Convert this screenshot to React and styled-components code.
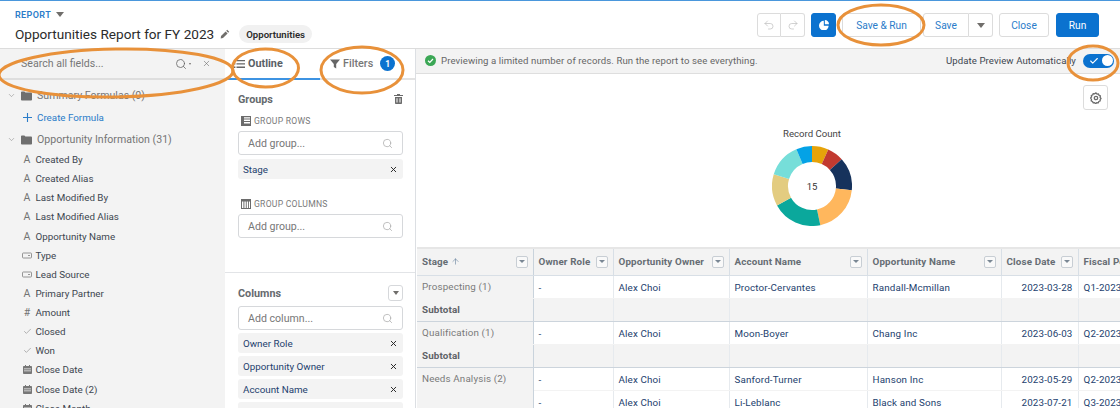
import React from "react";
import styled, { createGlobalStyle } from "styled-components";
import { Search, X, ChevronDown, Undo2, Redo2, Check, ArrowUp } from "lucide-react";

const Global = createGlobalStyle`
  html, body { margin: 0; padding: 0; height: 408px; overflow: hidden; background: #fff; }
  body { font-family: Roboto, "Liberation Sans", sans-serif; font-size: 11px; color: #2b3a4a; }
  * { box-sizing: border-box; }
`;

const Page = styled.div`
  position: relative; width: 1120px; height: 408px; overflow: hidden;
  display: flex; flex-direction: column; border-top: 1.5px solid #4a97dc;
`;
const Header = styled.header`
  height: 48px; flex: none; display: flex; align-items: flex-start; justify-content: space-between;
  padding: 6px 21px 0 15px; border-bottom: 1.5px solid #dcdcdc;
`;
const TitleBlock = styled.div`display: flex; flex-direction: column; gap: 2px;`;
const Eyebrow = styled.div`
  display: flex; align-items: center; gap: 5px; height: 15px;
  font-size: 9px; font-weight: 600; letter-spacing: .4px; color: #2a7cc9;
`;
const Caret = styled.span`
  width: 0; height: 0; border-left: ${p => p.$w || 4}px solid transparent; border-right: ${p => p.$w || 4}px solid transparent;
  border-top: ${p => p.$h || 5}px solid ${p => p.$c || "#706e6b"};
`;
const TitleRow = styled.div`display: flex; align-items: center; height: 20px;`;
const Title = styled.h1`margin: 0; font-size: 13.6px; font-weight: 400; color: #2b2b2b; white-space: nowrap;`;
const PencilWrap = styled.span`display: flex; margin: 0 9px 0 6px; color: #706e6b;`;
const Badge = styled.span`
  height: 18px; padding: 0 7px; border-radius: 9px; background: #f1f1f1; display: flex; align-items: center;
  font-size: 9.6px; font-weight: 600; color: #2b2b2b;
`;
const Toolbar = styled.div`display: flex; align-items: center; margin-top: 6px;`;
const Btn = styled.button`
  height: 24px; width: ${p => p.$w}px; margin-left: ${p => p.$ml || 0}px; padding: 0; font: inherit; font-size: 10.2px;
  display: flex; align-items: center; justify-content: center;
  border: 1px solid ${p => p.$primary ? "#0b72cf" : "#dcdcdc"}; border-radius: 3px;
  background: ${p => p.$primary ? "#0b72cf" : "#fff"}; color: ${p => p.$primary ? "#fff" : "#2a7cc9"};
`;
const SegGroup = styled.div`display: flex; margin-left: ${p => p.$ml || 0}px;`;
const SegBtn = styled(Btn)`
  border-radius: 0; color: ${p => p.$muted ? "#bdbdbd" : "#2a7cc9"};
  &:first-child { border-radius: 3px 0 0 3px; }
  &:last-child { border-radius: 0 3px 3px 0; border-left: 0; }
`;

const Body = styled.div`flex: 1; min-height: 0; display: flex;`;
const Fields = styled.aside`width: 225px; flex: none; background: #f3f3f3; display: flex; flex-direction: column;`;
const FieldSearch = styled.div`
  height: 31px; flex: none; display: flex; align-items: center; padding: 0 14px 0 21px; color: #706e6b;
  border-bottom: 2px solid #dedede; font-size: 10.6px;
`;
const Placeholder = styled.span`flex: 1; color: ${p => p.$c || "#777"};`;
const TinyCaret = styled.span`margin: 1px 11px 0 2px; display: flex;`;
const Tree = styled.div`padding-top: 5px; display: flex; flex-direction: column;`;
const Folder = styled.div`
  height: 21px; display: flex; align-items: center; padding-left: 7px; gap: 5px; color: #757575; font-size: 10.6px;
`;
const CreateRow = styled.div`
  height: 23px; display: flex; align-items: center; padding-left: 22px; gap: 4px; color: #2a7cc9; font-size: 9.8px;
`;
const FieldRow = styled.div`
  height: 19.13px; flex: none; display: flex; align-items: center; padding-left: 21px; font-size: 9.8px; color: #3d4650;
`;
const FieldIcon = styled.span`
  width: 12px; display: flex; justify-content: center; align-items: center; color: #747474; font-size: 10.5px; flex: none;
`;

const Outline = styled.section`
  width: 191px; flex: none; border-right: 1.5px solid #dcdfe3; display: flex; flex-direction: column;
`;
const Tabs = styled.div`height: 31px; flex: none; display: flex;`;
const Tab = styled.div`
  width: 96px; display: flex; align-items: center; padding-left: ${p => p.$pl}px; gap: 3px; font-size: 10.8px;
  font-weight: ${p => p.$active ? 700 : 500}; color: ${p => p.$active ? "#5a6066" : "#777"};
  border-bottom: 2px solid ${p => p.$active ? "#3d93e2" : "#e3e3e3"};
`;
const Count = styled.span`
  margin-left: 4px; width: 15px; height: 15px; border-radius: 50%; background: #0b72cf; color: #fff;
  font-size: 8.5px; font-weight: 700; display: flex; align-items: center; justify-content: center;
`;
const Section = styled.div`
  padding: ${p => p.$pad}; height: ${p => p.$h ? p.$h + "px" : "auto"}; flex: none;
  border-bottom: ${p => p.$line ? "1.5px solid #e2e4e7" : "none"};
`;
const SectionHead = styled.div`
  height: 18px; display: flex; align-items: center; justify-content: space-between; font-size: 10.8px; font-weight: 700; color: #666a6e;
`;
const SubHead = styled.div`
  height: 12px; margin: ${p => p.$m}; padding-left: 3px; display: flex; align-items: center; gap: 3px; font-size: 8.6px; letter-spacing: .25px; color: #7a7a7a;
`;
const InputBox = styled.div`
  height: 24px; border: 1px solid #d6d8db; border-radius: 3px; padding: 0 9px; display: flex; align-items: center;
  font-size: 10.6px; color: #7f7f7f; background: #fff;
`;
const Chip = styled.div`
  height: 20px; margin-top: ${p => p.$mt ?? 3}px; border-radius: 3px; background: #f3f3f3; padding: 0 5px; display: flex; align-items: center; justify-content: space-between;
  font-size: 9.8px; color: #23416e;
`;
const ColumnsInput = styled(InputBox)`margin-top: 4px;`;
const MenuBtn = styled.div`
  width: 15px; height: 16px; border: 1px solid #d6d8db; border-radius: 3px; display: flex; align-items: center; justify-content: center;
`;

const Preview = styled.main`flex: 1; min-width: 0; display: flex; flex-direction: column; overflow: hidden;`;
const Notice = styled.div`
  height: 24.5px; flex: none; background: #f3f3f3; border-bottom: 1.5px solid #dedede; display: flex; align-items: center;
  padding: 0 6px 0 9px; font-size: 9.6px; color: #666;
`;
const NoticeText = styled.span`flex: 1; margin-left: 5px; white-space: nowrap; letter-spacing: .1px;`;
const AutoLabel = styled.span`color: #3d4650; margin-right: 7px; letter-spacing: .1px; white-space: nowrap;`;
const Toggle = styled.span`
  width: 31px; height: 14px; border-radius: 7px; background: #0b72cf; display: flex; align-items: center; justify-content: space-between; padding: 0 1.5px 0 6px; color: #fff;
`;
const Knob = styled.span`width: 11px; height: 11px; border-radius: 50%; background: #fff;`;
const ChartZone = styled.div`
  height: 175px; flex: none; position: relative; display: flex; flex-direction: column; align-items: center; padding: 54.5px 0 0 88px;
`;
const GearBtn = styled.div`
  position: absolute; top: 11.5px; right: 12px; width: 25px; height: 25px; border: 1px solid #dcdcdc; border-radius: 3px; display: flex; align-items: center; justify-content: center; color: #6b6b6b;
`;
const ChartTitle = styled.div`font-size: 9.6px; color: #444; height: 15px; margin-bottom: 3px;`;

const Table = styled.table`
  table-layout: fixed; width: 762px; flex: none; border-collapse: collapse; font-size: 9.8px;
  border-top: 2px solid #e6e6e6; margin-top: -2px; margin-left: 1px;
`;
const Th = styled.th`
  height: 28px; padding: 0 5px; background: #f3f3f3; text-align: left; font-weight: 700; font-size: 9.8px; color: #666d73; letter-spacing: .15px;
  border-right: 1px solid ${p => p.$group ? "#c9d3dc" : "#d8dfe6"}; border-bottom: 1px solid #d8dfe6; white-space: nowrap;
`;
const ThInner = styled.div`display: flex; align-items: center; justify-content: space-between;`;
const ThLabel = styled.span`display: flex; align-items: center; gap: 3px;`;
const Filter = styled.span`
  width: 12px; height: 12px; border: 1px solid #c8ced4; border-radius: 2px; background: #f9f9f9; display: flex; align-items: center; justify-content: center; flex: none;
`;
const Td = styled.td`
  height: 23px; padding: 0 5px; white-space: nowrap; overflow: hidden; color: #23416e; letter-spacing: .15px;
  text-align: ${p => p.$right ? "right" : "left"}; background: ${p => p.$shade ? "#f3f3f3" : "#fff"};
  border-right: 1px solid #e6eaee; border-bottom: 1px solid ${p => p.$end ? "#ccd4dc" : "#f3f3f3"};
`;
const GroupTd = styled(Td)`
  background: #f3f3f3; color: ${p => p.$bold ? "#5f6368" : "#7a7a7a"}; font-weight: ${p => p.$bold ? 700 : 400}; vertical-align: top; padding-top: 5px;
  border-right: 1px solid #c9d3dc;
`;

const Overlay = styled.svg`position: absolute; left: 0; top: 0; width: 1120px; height: 408px; pointer-events: none;`;

const Pencil = () => (
  <svg width="10" height="10" viewBox="0 0 10 10" fill="currentColor"><path d="M7.2.8l2 2-1 1-2-2zM5.6 2.4l2 2L3 9 .7 9.4 1 7z" /></svg>
);
const FolderIcon = () => (
  <svg width="11" height="10" viewBox="0 0 11 10" fill="#6f6f6f"><path d="M0 1.2C0 .7.4.4.8.4h2.6l1 1.2h5.8c.4 0 .8.4.8.8v6.4c0 .5-.4.8-.8.8H.8C.4 9.6 0 9.3 0 8.800z" /></svg>
);
const Chev = () => <ChevronDown size={9} color="#8a8a8a" strokeWidth={1.5} />;
const ListIcon = () => (
  <svg width="11" height="10" viewBox="0 0 11 10" fill="#666"><path d="M0 1h1.4v1.3H0zM2.5 1H11v1.3H2.5zM0 4.3h1.4v1.3H0zM2.5 4.3H11v1.3H2.5zM0 7.6h1.4v1.3H0zM2.5 7.6H11v1.3H2.5z" /></svg>
);
const FunnelIcon = () => (
  <svg width="10" height="10" viewBox="0 0 10 10" fill="#666"><path d="M0 .5h10L6.2 5v4.5L3.8 8V5z" /></svg>
);
const TrashIcon = () => (
  <svg width="9" height="10" viewBox="0 0 9 10" fill="#6b6b6b"><path d="M3 0h3v1h3v1H0V1h3zM1 3h7v6.2c0 .4-.3.8-.8.8H1.8c-.5 0-.8-.4-.8-.8zm1.5 1.2v4.4h1V4.2zm3 0v4.4h1V4.2z" /></svg>
);
const RowsIcon = () => (
  <svg width="10" height="10" viewBox="0 0 10 10" fill="#6b6b6b"><path d="M0 0h10v10H0zm3 1.2v1.4h6V1.2zm0 2.4V5h6V3.6zM3 6v1.4h6V6z" fillRule="evenodd" /></svg>
);
const ColsIcon = () => (
  <svg width="10" height="10" viewBox="0 0 10 10" fill="#6b6b6b"><path d="M0 0h10v10H0zm1 2.6V9h1.4V2.6zm2.4 0V9h1.4V2.6zm2.3 0V9h1.4V2.6zm2.3 0V9H9V2.6z" fillRule="evenodd" /></svg>
);
const PieBtnIcon = () => (
  <svg width="10" height="10" viewBox="0 0 12 12" fill="#fff"><path d="M7 0a5 5 0 0 1 5 5H7zM5.800 1v6h5.800A5.800 5.800 0 1 1 5.800 1z" /></svg>
);
const GearIcon = () => (
  <svg width="12" height="12" viewBox="0 0 12 12" fill="none" stroke="#6b6b6b"><path d="M6 .9l1 1.2 1.5-.2.5 1.4 1.4.6-.3 1.5.9 1.1-.9 1.1.1 1.4-1.4.5-.6 1.4-1.5-.2-1 1-1.1-1-1.5.2-.5-1.4-1.4-.6.3-1.4L.6 6l1-1.1-.3-1.4 1.4-.6.5-1.3 1.5.2z" strokeWidth="1.3" strokeLinejoin="round" /><circle cx="6" cy="6" r="1.7" strokeWidth="1.3" /></svg>
);
const CalIcon = () => (
  <svg width="9" height="9" viewBox="0 0 9 9" fill="#777"><path d="M2 0h1v1h3V0h1v1h1.2c.4 0 .8.3.8.8v6.400c0 .5-.4.8-.8.8H.8C.4 9 0 8.700 0 8.200V1.800C0 1.300.4 1 .8 1H2zM1 3.500v.8h7v-.8zm0 2v.8h7v-.8z" fillRule="evenodd" /></svg>
);
const PickIcon = () => (
  <svg width="10" height="7" viewBox="0 0 10 7" fill="none" stroke="#8a8a8a" strokeWidth=".9"><rect x=".5" y="1" width="9" height="5" rx=".8" /><path d="M6 3.500h2" /></svg>
);
const CheckGreen = () => (
  <svg width="11" height="11" viewBox="0 0 11 11"><circle cx="5.500" cy="5.500" r="5.500" fill="#3ba755" /><path d="M3 5.700l1.800 1.700L8 4" fill="none" stroke="#fff" strokeWidth="1.200" /></svg>
);

const fieldIcon = t => ({
  a: <span>A</span>,
  p: <PickIcon />,
  n: <span>#</span>,
  c: <Check size={9} strokeWidth={1.4} />,
  d: <CalIcon />,
}[t]);

const fields = [
  ["a", "Created By"], ["a", "Created Alias"], ["a", "Last Modified By"], ["a", "Last Modified Alias"],
  ["a", "Opportunity Name"], ["p", "Type"], ["p", "Lead Source"], ["a", "Primary Partner"], ["n", "Amount"],
  ["c", "Closed"], ["c", "Won"], ["d", "Close Date"], ["d", "Close Date (2)"], ["d", "Close Month"],
];

const polar = (cx, cy, r, deg) => {
  const a = (deg - 90) * Math.PI / 180;
  return [cx + r * Math.cos(a), cy + r * Math.sin(a)];
};
const arc = (from, to) => {
  const [cx, cy, R, r] = [40, 40, 40, 24];
  const large = to - from > 180 ? 1 : 0;
  const p = [polar(cx, cy, R, from), polar(cx, cy, R, to), polar(cx, cy, r, to), polar(cx, cy, r, from)];
  return `M${p[0]} A${R} ${R} 0 ${large} 1 ${p[1]} L${p[2]} A${r} ${r} 0 ${large} 0 ${p[3]} Z`;
};
const slices = [
  [0, 24, "#e6a30a"], [24, 48, "#c23a30"], [48, 96, "#16325c"], [96, 168, "#ffb75d"],
  [168, 241, "#0ba89c"], [241, 287, "#e3cc80"], [287, 337, "#76ded9"], [337, 360, "#04a2e6"],
];
const Donut = () => (
  <svg width="80" height="80" viewBox="0 0 80 80">
    {slices.map(([a, b, c]) => <path key={c} d={arc(a, b)} fill={c} />)}
    <text x="40" y="43.500" textAnchor="middle" fontSize="9.500" fill="#333" fontFamily="Roboto, sans-serif">15</text>
  </svg>
);

const cols = [
  ["Stage", 116], ["Owner Role", 80], ["Opportunity Owner", 116], ["Account Name", 138],
  ["Opportunity Name", 134], ["Close Date", 77], ["Fiscal Period", 101],
];
const TinyFilter = () => <Filter><Caret $w={3} $h={3.5} $c="#7a8794" /></Filter>;

const Cells = ({ account, name, date, quarter, end }) => (
  <>
    <Td $end={end}>-</Td><Td $end={end}>Alex Choi</Td><Td $end={end}>{account}</Td><Td $end={end}>{name}</Td>
    <Td $end={end} $right>{date}</Td><Td $end={end}>{quarter}</Td>
  </>
);
const Subtotal = () => (
  <tr>
    <GroupTd $bold $end>Subtotal</GroupTd>
    {[0, 1, 2, 3, 4, 5].map(i => <Td key={i} $shade $end />)}
  </tr>
);

export default function App() {
  return (
    <Page>
      <Global />
      <Header>
        <TitleBlock>
          <Eyebrow>REPORT <Caret /></Eyebrow>
          <TitleRow>
            <Title>Opportunities Report for FY 2023</Title>
            <PencilWrap><Pencil /></PencilWrap>
            <Badge>Opportunities</Badge>
          </TitleRow>
        </TitleBlock>
        <Toolbar>
          <SegGroup>
            <SegBtn $w={24} $muted><Undo2 size={12} strokeWidth={1.4} /></SegBtn>
            <SegBtn $w={24} $muted><Redo2 size={12} strokeWidth={1.4} /></SegBtn>
          </SegGroup>
          <Btn $w={25} $ml={6} $primary><PieBtnIcon /></Btn>
          <Btn $w={79} $ml={6}>Save &amp; Run</Btn>
          <SegGroup $ml={2}>
            <SegBtn $w={46}>Save</SegBtn>
            <SegBtn $w={24}><Caret $w={4} $h={5} /></SegBtn>
          </SegGroup>
          <Btn $w={50} $ml={6}>Close</Btn>
          <Btn $w={43} $ml={7} $primary>Run</Btn>
        </Toolbar>
      </Header>
      <Body>
        <Fields>
          <FieldSearch>
            <Placeholder>Search all fields...</Placeholder>
            <Search size={12} color="#666" strokeWidth={1.6} />
            <TinyCaret><Caret $w={1.5} $h={2} /></TinyCaret>
            <X size={9} color="#666" strokeWidth={1.5} />
          </FieldSearch>
          <Tree>
            <Folder><Chev /><FolderIcon /><span>Summary Formulas (0)</span></Folder>
            <CreateRow>
              <svg width="11" height="11" viewBox="0 0 11 11" stroke="#2a7cc9" strokeWidth="1.100"><path d="M5.500 1v9M1 5.500h9" /></svg>
              Create Formula
            </CreateRow>
            <Folder><Chev /><FolderIcon /><span>Opportunity Information (31)</span></Folder>
            {fields.map(([t, l]) => (
              <FieldRow key={l}>
                <FieldIcon>{fieldIcon(t)}</FieldIcon>
                <span>&nbsp;{l}</span>
              </FieldRow>
            ))}
          </Tree>
        </Fields>
        <Outline>
          <Tabs>
            <Tab $active $pl={9}><ListIcon />Outline</Tab>
            <Tab $pl={10}><FunnelIcon />Filters<Count>1</Count></Tab>
          </Tabs>
          <Section $pad="10px 12px 0 13px" $h={193} $line>
            <SectionHead>Groups<TrashIcon /></SectionHead>
            <SubHead $m="7px 0 4px"><RowsIcon />GROUP ROWS</SubHead>
            <InputBox>
              <Placeholder>Add group...</Placeholder><Search size={11} color="#aaa" strokeWidth={1.6} />
            </InputBox>
            <Chip $mt={4}>Stage<X size={9} color="#222" strokeWidth={2.5} /></Chip>
            <SubHead $m="19px 0 4px"><ColsIcon />GROUP COLUMNS</SubHead>
            <InputBox>
              <Placeholder>Add group...</Placeholder><Search size={11} color="#aaa" strokeWidth={1.6} />
            </InputBox>
          </Section>
          <Section $pad="11px 12px 0 13px">
            <SectionHead>Columns<MenuBtn><Caret $w={3.5} $h={4} /></MenuBtn></SectionHead>
            <ColumnsInput>
              <Placeholder>Add column...</Placeholder><Search size={11} color="#aaa" strokeWidth={1.6} />
            </ColumnsInput>
            {["Owner Role", "Opportunity Owner", "Account Name", "Opportunity Name"].map(c => (
              <Chip key={c}>{c}<X size={9} color="#222" strokeWidth={2.5} /></Chip>
            ))}
          </Section>
        </Outline>
        <Preview>
          <Notice>
            <CheckGreen />
            <NoticeText>Previewing a limited number of records. Run the report to see everything.</NoticeText>
            <AutoLabel>Update Preview Automatically</AutoLabel>
            <Toggle><Check size={10} strokeWidth={2.6} /><Knob /></Toggle>
          </Notice>
          <ChartZone>
            <GearBtn><GearIcon /></GearBtn>
            <ChartTitle>Record Count</ChartTitle>
            <Donut />
          </ChartZone>
          <Table>
            <colgroup>{cols.map(([l, w]) => <col key={l} width={w} />)}</colgroup>
            <thead>
              <tr>
                {cols.map(([l], i) => (
                  <Th key={l} $group={i === 0}>
                    <ThInner>
                      <ThLabel>{l}{i === 0 && <ArrowUp size={9} color="#5a7896" strokeWidth={1.5} />}</ThLabel>
                      {i < 6 && <TinyFilter />}
                    </ThInner>
                  </Th>
                ))}
              </tr>
            </thead>
            <tbody>
              <tr>
                <GroupTd>Prospecting (1)</GroupTd>
                <Cells account="Proctor-Cervantes" name="Randall-Mcmillan" date="2023-03-28" quarter="Q1-2023" />
              </tr>
              <Subtotal />
              <tr>
                <GroupTd>Qualification (1)</GroupTd>
                <Cells account="Moon-Boyer" name="Chang Inc" date="2023-06-03" quarter="Q2-2023" />
              </tr>
              <Subtotal />
              <tr>
                <GroupTd rowSpan={2}>Needs Analysis (2)</GroupTd>
                <Cells account="Sanford-Turner" name="Hanson Inc" date="2023-05-29" quarter="Q2-2023" />
              </tr>
              <tr>
                <Cells account="Li-Leblanc" name="Black and Sons" date="2023-07-21" quarter="Q3-2023" />
              </tr>
            </tbody>
          </Table>
        </Preview>
      </Body>
      <Overlay viewBox="0 0 1120 408" fill="none" stroke="#e8913a" strokeWidth="3">
        <ellipse cx="116" cy="72" rx="117" ry="24" transform="rotate(-1 116 72)" />
        <ellipse cx="265.5" cy="67" rx="33" ry="19" />
        <ellipse cx="362" cy="69" rx="41" ry="23" />
        <ellipse cx="881" cy="24" rx="43" ry="20" />
        <ellipse cx="1093" cy="62" rx="25" ry="17" />
      </Overlay>
    </Page>
  );
}
